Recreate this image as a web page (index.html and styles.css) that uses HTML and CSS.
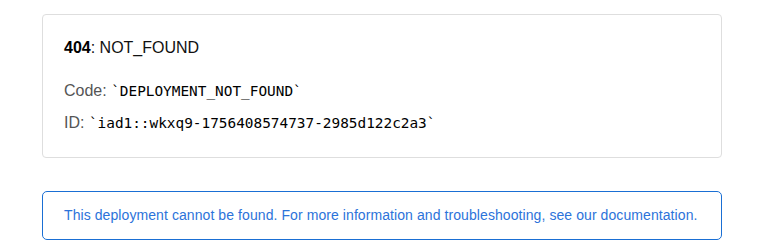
FILE: index.html
```html
<!DOCTYPE html>
<html lang="en">
<head>
<meta charset="utf-8">
<title>404: NOT_FOUND</title>
<link rel="stylesheet" href="styles.css">
</head>
<body>
<main class="page">
  <section class="devinfo">
    <div class="error-code"><strong>404</strong>: NOT_FOUND</div>
    <div class="devinfo-line">Code: <code>`DEPLOYMENT_NOT_FOUND`</code></div>
    <div class="devinfo-line">ID: <code>`iad1::wkxq9-1756408574737-2985d122c2a3`</code></div>
  </section>
  <a class="note" href="#">This deployment cannot be found. For more information and troubleshooting, see our documentation.</a>
</main>
</body>
</html>
```
FILE: styles.css
```css
html, body {
  margin: 0;
  padding: 0;
  background: #fff;
}
body {
  font-family: "Liberation Sans", Arial, Helvetica, sans-serif;
  -webkit-font-smoothing: antialiased;
}
.page {
  width: 680px;
  padding: 14px 0 0 42px;
  display: flex;
  flex-direction: column;
}
.devinfo {
  border: 1px solid #dedede;
  border-radius: 4px;
  padding: 23px 21px 24px 21px;
  display: flex;
  flex-direction: column;
  font-size: 16px;
  line-height: 20px;
  color: #555;
}
.error-code {
  color: #111;
  margin-bottom: 23px;
}
.error-code strong {
  font-weight: 700;
  color: #000;
}
.devinfo-line + .devinfo-line {
  margin-top: 12px;
}
.devinfo-line code {
  font-family: "DejaVu Sans Mono", Menlo, monospace;
  font-size: 14.4px;
  color: #000;
}
.note {
  margin-top: 33px;
  display: block;
  border: 1px solid #1a6fd4;
  border-radius: 5px;
  padding: 15px 21px 16px;
  font-size: 14px;
  line-height: 16px;
  letter-spacing: 0.08px;
  color: #2c73da;
  text-decoration: none;
}
```
